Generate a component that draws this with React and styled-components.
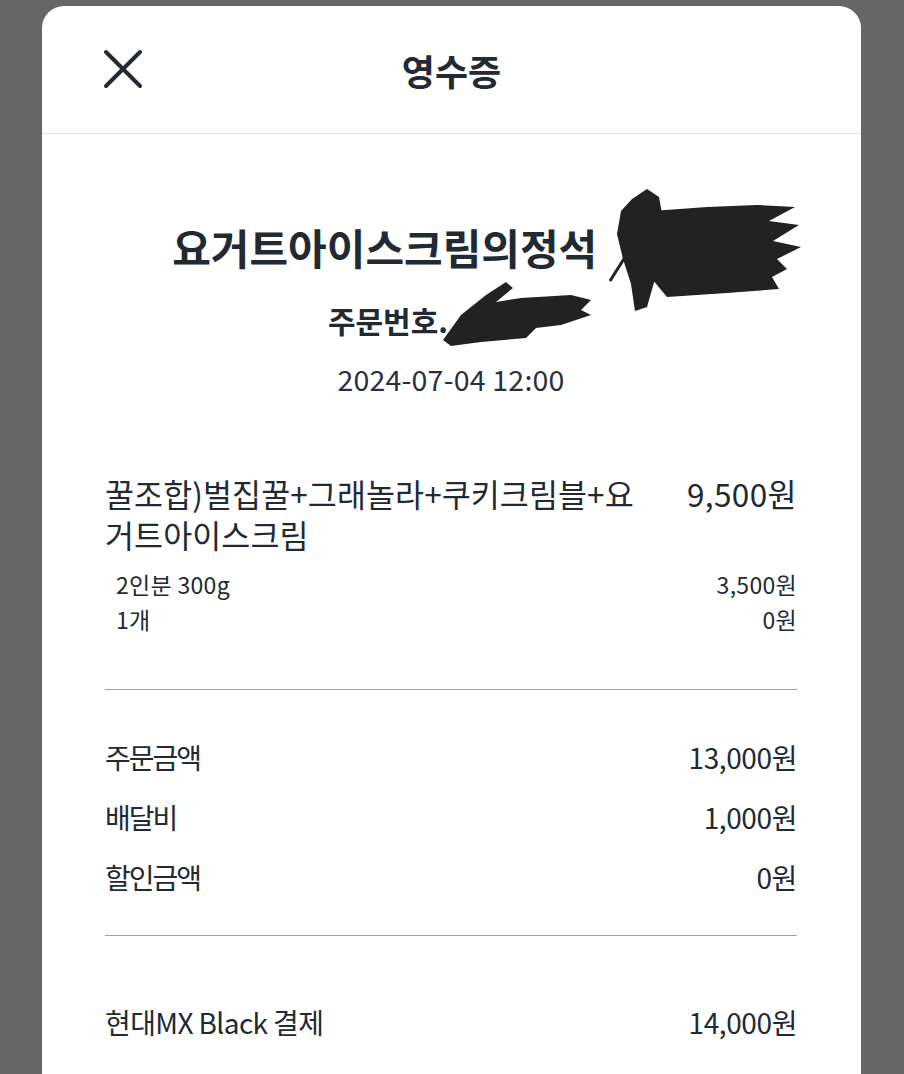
import styled, { createGlobalStyle } from 'styled-components';

const GlobalStyle = createGlobalStyle`
    body {
        margin: 0;
        background: #666666;
        font-family: "Noto Sans CJK KR", "Noto Sans", sans-serif;
        color: #212a33;
    }
`;

const options = [
    { label: '2인분 300g', price: '3,500원' },
    { label: '1개', price: '0원' },
];

const amounts = [
    { label: '주문금액', price: '13,000원' },
    { label: '배달비', price: '1,000원' },
    { label: '할인금액', price: '0원' },
];

const App = () => {
    return (
        <>
            <GlobalStyle />
            <Sheet>
                <Header>
                    <CloseButton aria-label="닫기">
                        <svg width="40" height="40" viewBox="0 0 40 40">
                            <path d="M3 3 L37 37 M37 3 L3 37" stroke="#232a33" strokeWidth="4" strokeLinecap="round" fill="none" />
                        </svg>
                    </CloseButton>
                    <Title>영수증</Title>
                </Header>
                <Body>
                    <StoreName>
                        요거트아이스크림의정석&nbsp;
                        <Redact $w={123}>
                            <StoreScribble width="195" height="125" viewBox="0 0 195 125">
                                <path d="M45 22 L100 18 L150 16 L188 18 L162 32 L192 36 L166 52 L194 58 L170 70 L180 80 L165 88 L172 100 L120 104 L60 108 L45 90 Z" fill="#222" />
                                <path d="M25 10 L40 0 L52 8 L56 30 L53 60 L48 90 L40 118 L28 122 L24 95 L16 70 L10 45 L14 22 Z" fill="#222" />
                                <path d="M3 92 L52 14" stroke="#222" strokeWidth="3" fill="none" />
                            </StoreScribble>
                        </Redact>
                    </StoreName>
                    <OrderNo>
                        주문번호.
                        <Redact $w={126}>
                            <OrderScribble width="155" height="66" viewBox="0 0 155 66">
                                <path d="M2 60 L20 35 L45 15 L65 2 L72 8 L55 22 L80 18 L130 15 L150 20 L140 30 L150 35 L120 45 L95 48 L85 58 L40 62 L10 66 Z" fill="#222" />
                            </OrderScribble>
                        </Redact>
                    </OrderNo>
                    <OrderDate>2024-07-04 12:00</OrderDate>

                    <ItemRow>
                        <ItemName>꿀조합)벌집꿀+그래놀라+쿠키크림블+요거트아이스크림</ItemName>
                        <ItemPrice>9,500원</ItemPrice>
                    </ItemRow>
                    <OptionList>
                        {options.map((o) => (
                            <OptionRow key={o.label}>
                                <span>{o.label}</span>
                                <span>{o.price}</span>
                            </OptionRow>
                        ))}
                    </OptionList>

                    <Divider $mt={52} />

                    <AmountList>
                        {amounts.map((a) => (
                            <AmountRow key={a.label}>
                                <span>{a.label}</span>
                                <Price>{a.price}</Price>
                            </AmountRow>
                        ))}
                    </AmountList>

                    <Divider $mt={28} />

                    <PayRow>
                        <span>현대MX Black 결제</span>
                        <Price>14,000원</Price>
                    </PayRow>
                </Body>
            </Sheet>
        </>
    );
};

const Sheet = styled.div`
    margin: 6px 43px 0 42px;
    min-height: 1068px;
    background: #ffffff;
    border-radius: 22px 22px 0 0;
    overflow: hidden;
`;

const Header = styled.header`
    position: relative;
    height: 127px;
    border-bottom: 1px solid #e2e2e2;
    display: flex;
    align-items: center;
    justify-content: center;
`;

const CloseButton = styled.button`
    position: absolute;
    left: 61px;
    top: 43px;
    width: 40px;
    height: 40px;
    padding: 0;
    border: none;
    background: none;
    display: flex;
`;

const Title = styled.h1`
    margin: 0;
    font-size: 36px;
    font-weight: 700;
    line-height: 40px;
    color: #232a33;
`;

const Body = styled.div`
    padding: 0 64px 0 63px;
`;

const StoreName = styled.div`
    margin-top: 88px;
    text-align: center;
    font-size: 42px;
    font-weight: 700;
    line-height: 50px;
    white-space: nowrap;
`;

const Redact = styled.span`
    position: relative;
    display: inline-block;
    width: ${(p) => p.$w}px;
    height: 1em;
    vertical-align: middle;
`;

const StoreScribble = styled.svg`
    position: absolute;
    left: 0;
    top: -44px;
`;

const OrderScribble = styled.svg`
    position: absolute;
    left: -7px;
    top: -29px;
`;

const OrderNo = styled.div`
    margin-top: 25px;
    text-align: center;
    font-size: 30px;
    font-weight: 700;
    line-height: 40px;
    white-space: nowrap;
`;

const OrderDate = styled.div`
    margin-top: 19px;
    text-align: center;
    font-size: 28.5px;
    line-height: 40px;
    color: #2a3038;
    letter-spacing: 0.2px;
`;

const ItemRow = styled.div`
    margin-top: 74px;
    display: flex;
    justify-content: space-between;
    font-size: 31.5px;
    line-height: 41px;
`;

const ItemName = styled.div`
    width: 540px;
    word-break: break-all;
    letter-spacing: 0.1px;
`;

const ItemPrice = styled.div`
    white-space: nowrap;
    letter-spacing: 0.4px;
`;

const OptionList = styled.div`
    margin-top: 12px;
    padding-left: 11px;
`;

const OptionRow = styled.div`
    display: flex;
    justify-content: space-between;
    font-size: 23px;
    line-height: 35px;
    letter-spacing: 0.3px;
`;

const Divider = styled.hr`
    margin: ${(p) => p.$mt}px 0 0;
    border: none;
    height: 1px;
    background: #9a9fa2;
`;

const AmountList = styled.div`
    padding-top: 37px;
`;

const AmountRow = styled.div`
    display: flex;
    justify-content: space-between;
    font-size: 28px;
    line-height: 60px;
    letter-spacing: -2px;
`;

const Price = styled.span`
    letter-spacing: -0.4px;
`;

const PayRow = styled(AmountRow)`
    margin-top: 56px;
    letter-spacing: -0.6px;
`;

export default App;
